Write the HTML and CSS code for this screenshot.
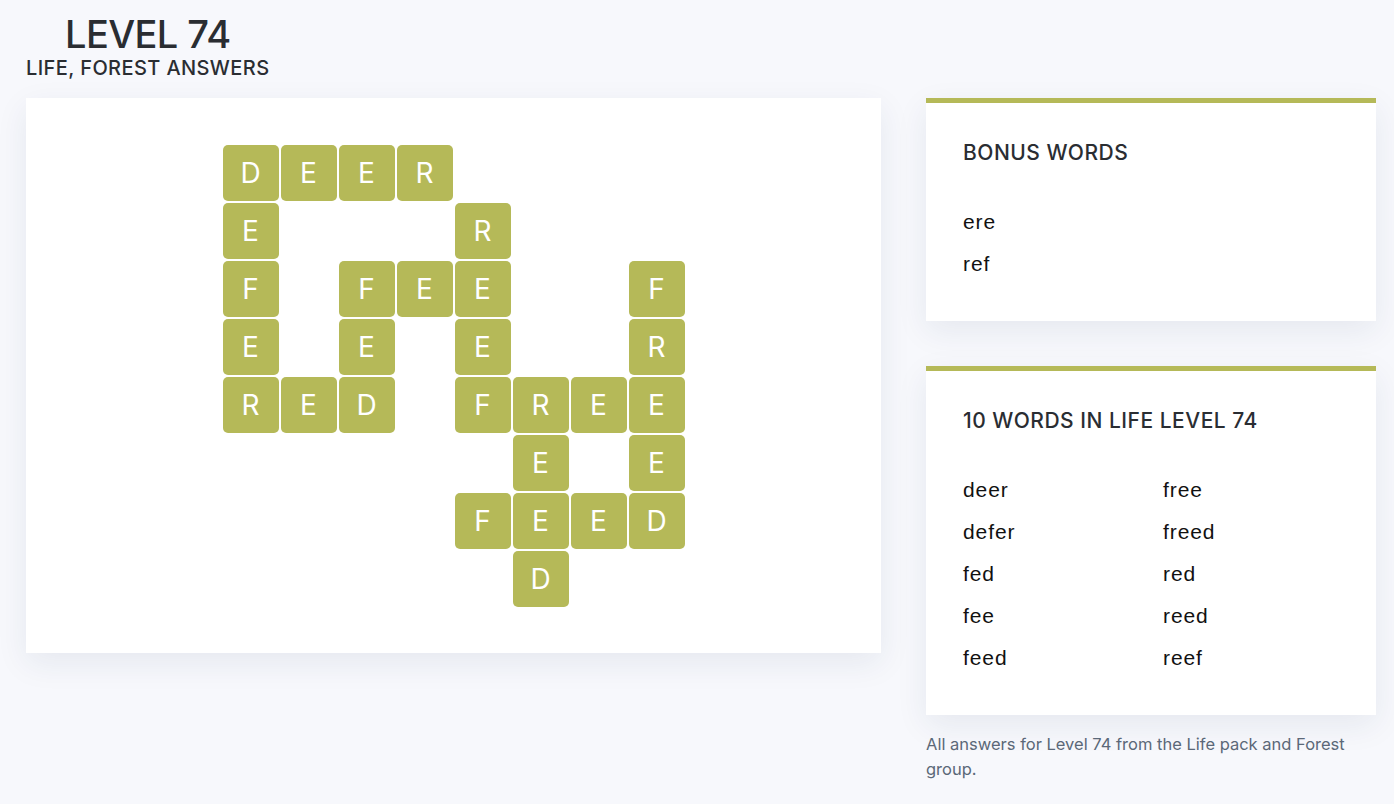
FILE: index.html
```html
<!DOCTYPE html>
<html lang="en">
<head>
    <meta charset="UTF-8">
    <meta name="viewport" content="width=device-width, initial-scale=1.0">
    <title>Level 74 - Life, Forest Answers</title>
    <link rel="stylesheet" href="styles.css">
</head>
<body>

<!-- Header -->
<div class="page-header">
    <h1>LEVEL 74</h1>
    <h2>LIFE, FOREST ANSWERS</h2>
</div>

<div class="layout">

    <!-- Puzzle board -->
    <div class="board">
        <div class="grid">
            <div class="tile">D</div><div class="tile">E</div><div class="tile">E</div><div class="tile">R</div><div></div><div></div><div></div><div></div>
            <div class="tile">E</div><div></div><div></div><div></div><div class="tile">R</div><div></div><div></div><div></div>
            <div class="tile">F</div><div></div><div class="tile">F</div><div class="tile">E</div><div class="tile">E</div><div></div><div></div><div class="tile">F</div>
            <div class="tile">E</div><div></div><div class="tile">E</div><div></div><div class="tile">E</div><div></div><div></div><div class="tile">R</div>
            <div class="tile">R</div><div class="tile">E</div><div class="tile">D</div><div></div><div class="tile">F</div><div class="tile">R</div><div class="tile">E</div><div class="tile">E</div>
            <div></div><div></div><div></div><div></div><div></div><div class="tile">E</div><div></div><div class="tile">E</div>
            <div></div><div></div><div></div><div></div><div class="tile">F</div><div class="tile">E</div><div class="tile">E</div><div class="tile">D</div>
            <div></div><div></div><div></div><div></div><div></div><div class="tile">D</div><div></div><div></div>
        </div>
    </div>

    <!-- Sidebar -->
    <div class="sidebar">
        <div class="card">
            <h3>BONUS WORDS</h3>
            <ul class="words">
                <li>ere</li>
                <li>ref</li>
            </ul>
        </div>

        <div class="card">
            <h3>10 WORDS IN LIFE LEVEL 74</h3>
            <ul class="words two-col">
                <li>deer</li>
                <li>defer</li>
                <li>fed</li>
                <li>fee</li>
                <li>feed</li>
                <li>free</li>
                <li>freed</li>
                <li>red</li>
                <li>reed</li>
                <li>reef</li>
            </ul>
        </div>

        <p class="note">All answers for Level 74 from the Life pack and Forest group.</p>
    </div>

</div>

</body>
</html>
```

FILE: styles.css
```css
body {
    background-color: #f7f8fc;
    color: #2a2d32;
    font-family: Inter, "Noto Sans", sans-serif;
    margin: 0;
    padding: 0;
}

.page-header {
    padding: 12px 0 0 26px;
    height: 98px;
    box-sizing: border-box;
}

.page-header h1 {
    margin: 0 0 0 39px;
    font-size: 38px;
    font-weight: 500;
    line-height: 44px;
    letter-spacing: -0.6px;
}

.page-header h2 {
    margin: 0;
    font-size: 20px;
    font-weight: 500;
    line-height: 24px;
    letter-spacing: 0.4px;
}

.layout {
    display: flex;
    align-items: flex-start;
    gap: 45px;
    padding: 0 18px 0 26px;
}

/* Tahta */
.board {
    flex: 1;
    height: 555px;
    background-color: white;
    box-shadow: 0 10px 30px rgba(30, 50, 90, 0.08);
    display: flex;
    align-items: center;
    justify-content: center;
}

.grid {
    display: grid;
    grid-template-columns: repeat(8, 56px);
    grid-template-rows: repeat(8, 56px);
    gap: 2px;
}

.tile {
    background-color: #b5b958;
    border-radius: 5px;
    color: white;
    font-size: 28px;
    display: flex;
    align-items: center;
    justify-content: center;
}

/* Yan panel */
.sidebar {
    width: 450px;
    display: flex;
    flex-direction: column;
    gap: 45px;
}

.card {
    background-color: white;
    border-top: 5px solid #b5b958;
    padding: 37px 37px 36px 37px;
    box-shadow: 0 10px 30px rgba(30, 50, 90, 0.08);
}

.card h3 {
    margin: 0 0 36px 0;
    font-size: 21px;
    font-weight: 500;
    line-height: 25px;
    letter-spacing: 0.5px;
}

.words {
    list-style: none;
    margin: 0;
    padding: 0;
    font-family: "Liberation Sans", Arial, sans-serif;
    font-size: 21px;
    letter-spacing: 0.9px;
    line-height: 42px;
    color: #111;
}

.two-col {
    display: grid;
    grid-template-columns: 200px 1fr;
    grid-template-rows: repeat(5, 42px);
    grid-auto-flow: column;
}

.note {
    margin: -28px 0 0 0;
    font-size: 16.5px;
    line-height: 25px;
    color: #5b6878;
}
```
